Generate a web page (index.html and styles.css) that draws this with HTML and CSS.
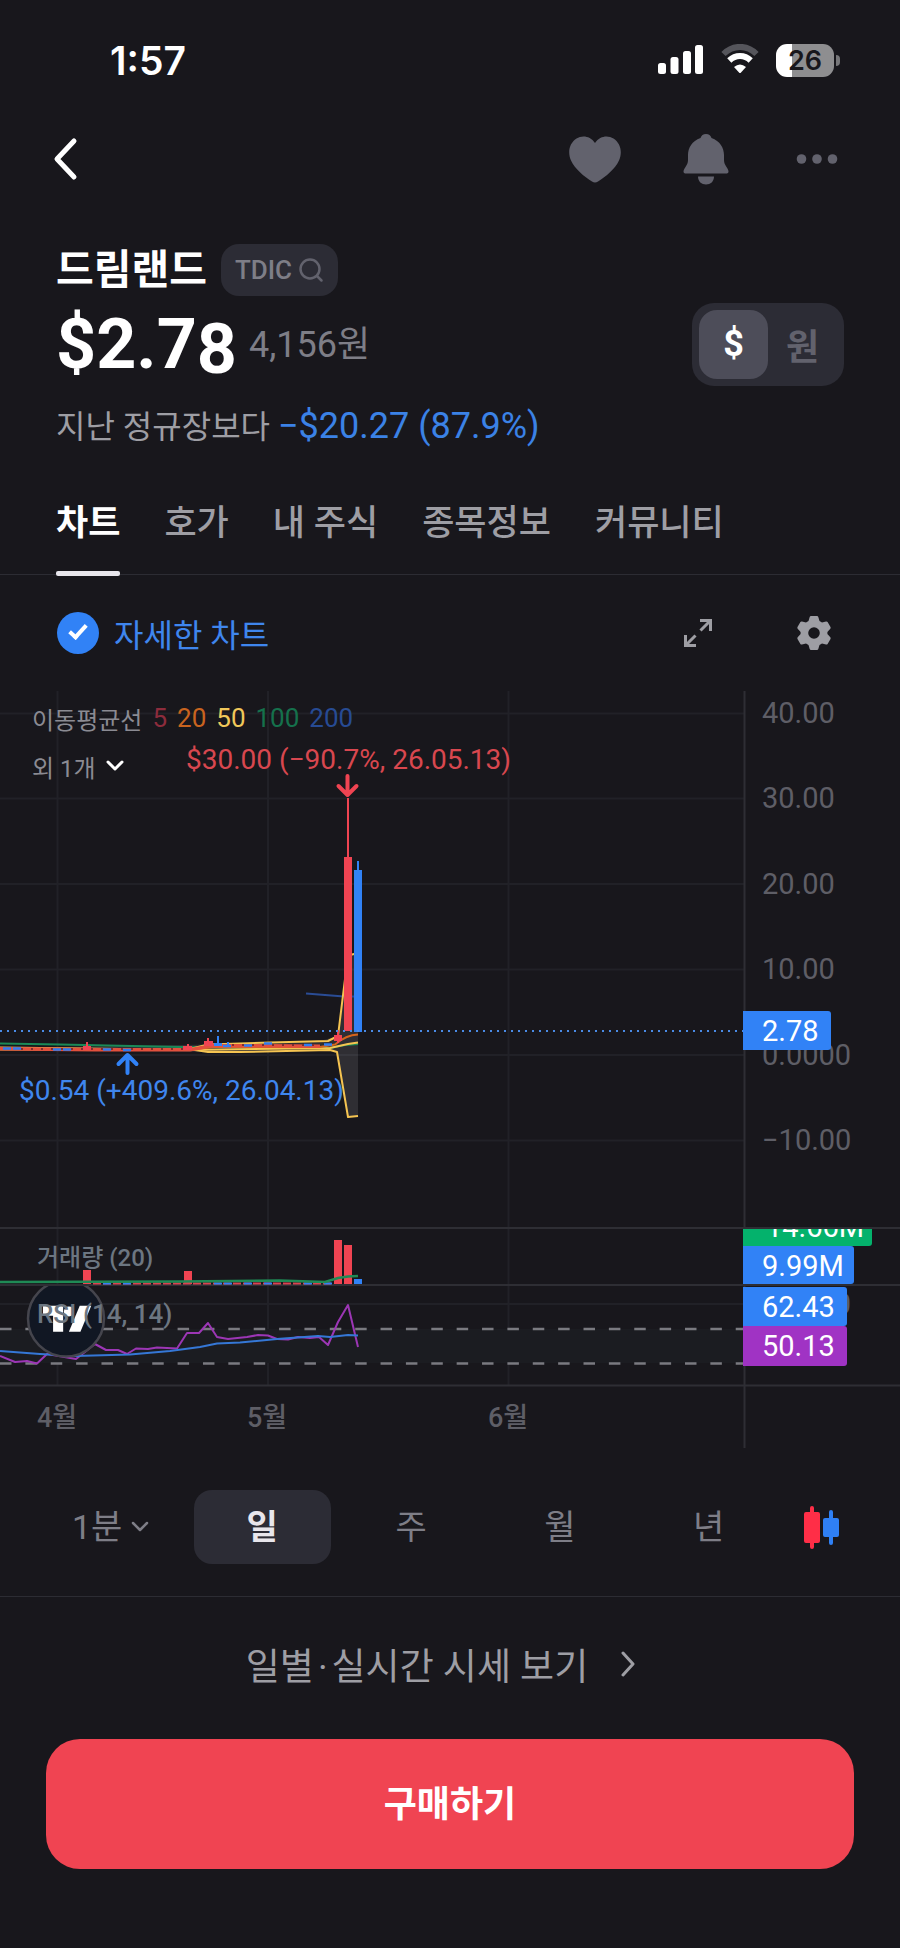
FILE: index.html
```html
<!DOCTYPE html>
<html lang="ko">
<head>
    <meta charset="UTF-8">
    <meta name="viewport" content="width=device-width, initial-scale=1.0">
    <title>드림랜드 TDIC</title>
    <link rel="stylesheet" href="styles.css">
</head>
<body>
    <div class="status-bar">
        <span class="clock">1:57</span>
        <div class="status-icons">
            <svg class="signal" width="46" height="32" viewBox="0 0 46 32" fill="#fff">
                <rect x="0" y="19" width="8" height="11" rx="2.5"/>
                <rect x="12.5" y="13" width="8" height="17" rx="2.5"/>
                <rect x="25" y="7" width="8" height="23" rx="2.5"/>
                <rect x="37" y="1" width="8" height="29" rx="2.5"/>
            </svg>
            <svg class="wifi" width="40" height="32" viewBox="0 0 40 32">
                <path d="M3.5 10C13 .5 27 .5 36.500 10" fill="none" stroke="#55555b" stroke-width="6"/>
                <path d="M9.300 16.500C15.500 10.500 24.500 10.500 30.700 16.500" fill="none" stroke="#fff" stroke-width="6"/>
                <path d="M14 23q6-5 12 0l-5 5.500q-1 1-2 0z" fill="#fff"/>
            </svg>
            <div class="battery"><span class="battery-level">26</span></div>
        </div>
    </div>

    <header class="nav">
        <a href="#" class="nav-back" aria-label="뒤로">
            <svg width="26" height="44" viewBox="0 0 26 44" fill="none" stroke="#fff" stroke-width="5" stroke-linecap="round" stroke-linejoin="round"><path d="M21 4L4 22l17 18"/></svg>
        </a>
        <div class="nav-actions">
            <button type="button" aria-label="관심">
                <svg width="54" height="50" viewBox="0 0 54 50" fill="#62626d"><path d="M27 9C22 1.500 14 1 8.500 4.500C1 9.500-.5 18.500 3 26.500C7 35 16 42.500 24 47.500q3 1.800 6 0C38 42.500 47 35 51 26.500C54.500 18.500 53 9.500 45.500 4.500C40 1 32 1.500 27 9z"/></svg>
            </button>
            <button type="button" aria-label="알림">
                <svg width="46" height="52" viewBox="0 0 46 52" fill="#62626d"><path d="M23 1c3 0 4.500 1.500 5.500 4C37 8 41 15 41 22v5c0 3 1 4.500 2.500 7c1.500 2 2 3.500 2 4.500c0 1.500-1 2-2.500 2H3c-1.500 0-2.500-.5-2.500-2c0-1 .5-2.500 2-4.500C4 31.500 5 30 5 27v-5C5 15 9 8 17.500 5C18.500 2.500 20 1 23 1z"/><path d="M15 43.500h16c0 5-3.500 8-8 8s-8-3-8-8z"/></svg>
            </button>
            <button type="button" aria-label="더보기">
                <svg width="42" height="12" viewBox="0 0 42 12" fill="#62626d"><circle cx="5.500" cy="6" r="4.800"/><circle cx="21" cy="6" r="4.800"/><circle cx="36.500" cy="6" r="4.800"/></svg>
            </button>
        </div>
    </header>

    <section class="summary">
        <div class="name-row">
            <h1>드림랜드</h1>
            <button type="button" class="ticker">TDIC
                <svg width="26" height="26" viewBox="0 0 26 26" fill="none" stroke="#62626d" stroke-width="2.500" stroke-linecap="round"><circle cx="12" cy="12" r="9.500"/><path d="M19 19l4.500 4.500"/></svg>
            </button>
        </div>
        <div class="price-row">
            <div class="price">
                <strong>$2.7<span class="rolling">8</span></strong>
                <span class="price-krw">4,156원</span>
            </div>
            <div class="currency">
                <button type="button" class="active">$</button>
                <button type="button">원</button>
            </div>
        </div>
        <p class="change">지난 정규장보다 <span>−$20.27 (87.9%)</span></p>
    </section>

    <nav class="tabs">
        <a href="#" class="active">차트</a>
        <a href="#">호가</a>
        <a href="#">내 주식</a>
        <a href="#">종목정보</a>
        <a href="#">커뮤니티</a>
    </nav>

    <div class="toolbar">
        <label for="detail" class="detail"><input type="checkbox" id="detail" checked>자세한 차트</label>
        <div class="toolbar-actions">
            <button type="button" aria-label="전체 화면">
                <svg width="30" height="30" viewBox="0 0 30 30" fill="none" stroke="#9e9ea4" stroke-width="3"><path d="M17 2.500h10.500V13M27 3L17.500 12.500M2.500 17v10.500H13M3 27l9.500-9.500"/></svg>
            </button>
            <button type="button" aria-label="설정">
                <svg width="34" height="36" viewBox="0 0 34 36"><path fill="#9e9ea4" fill-rule="evenodd" d="M14 1h6q1 0 1.300 1l1.200 4l2.500 1.500l4-1q1-.3 1.600.6l2.900 5q.5 1-.2 1.700L30.400 17v2l2.900 3.200q.7.700.2 1.700l-2.900 5q-.6.900-1.600.6l-4-1l-2.500 1.500l-1.200 4q-.3 1-1.300 1h-6q-1 0-1.300-1l-1.200-4L9 28.500l-4 1q-1 .3-1.600-.6l-2.900-5q-.5-1 .2-1.700L3.600 19v-2L.7 13.800q-.7-.7-.2-1.700l2.900-5q.6-.9 1.600-.6l4 1L11.500 6l1.200-4q.3-1 1.300-1zM17 12.200a5.800 5.800 0 1 0 0 11.600a5.800 5.800 0 1 0 0-11.600z"/></svg>
            </button>
        </div>
    </div>

    <div class="chart">
        <svg class="plot" viewBox="0 0 900 758" role="img" aria-label="일봉 차트">
            <defs>
                <clipPath id="volumePane"><rect x="0" y="538" width="900" height="56"/></clipPath>
                <clipPath id="rsiPane"><rect x="0" y="595" width="900" height="99"/></clipPath>
            </defs>

            <!-- grid -->
            <path class="grid" d="M57.500 0V694M268 0V694M508.500 0V694M0 22.500H744M0 107.500H744M0 193H744M0 278.500H744M0 364H744M0 449.500H744M0 613H744"/>
            <rect x="0" y="638" width="744" height="34" fill="#1b1c21"/>
            <path class="frame" d="M0 537H900M0 594H900M0 694.500H900M744.500 0V757"/>

            <!-- bollinger band -->
            <path d="M0 357L208 353.500L320 350L338 345L345 288L352 263L358 262V425L348 426L337 360L330 359L208 361L0 358z" fill="#fff" fill-opacity=".1"/>
            <g class="line">
                <path stroke="#2a4c94" d="M306 302.500L344 305.500H358"/>
                <path stroke="#1a8a58" d="M0 352.500L60 353.500L180 356L330 357L345 354L358 353"/>
                <path stroke="#f5c451" d="M0 356.500L120 358H190L208 353.500L270 351.500L328 350L338 345L345 288L350 264L358 262"/>
                <path stroke="#f5c451" d="M0 358.500L195 359L208 361L240 361L330 359L337 361L348 426L358 425"/>
                <path stroke="#f5c451" d="M190 359L330 357L348 353L358 351.500"/>
                <path stroke="#d5641c" d="M0 357.500L190 358.500L215 356L320 356L335 353.500Q346 344 358 343.500"/>
                <path stroke="#e2503d" d="M0 357L95 358H190L212 354H262L320 354.500"/>
                <path stroke="#e2503d" d="M0 358.500L95 359.500H190L212 355.500H262L320 356"/>
            </g>
            <path stroke="#2f7cf0" stroke-width="2.500" stroke-dasharray="8 2" d="M3 357.500H21M53 358.500H71M103 358.500H111M123 359H131M223 355H231M244 354.500H252M264 352.500H272M304 354H312M324 353.500H332"/>
            <path stroke="#7c3030" stroke-width="2" stroke-dasharray="2 8" d="M21 358H190M232 354H322"/>

            <!-- candles -->
            <g fill="#f04452">
                <path d="M83 355h8v4h-8zM86 351h2v6h-2zM183 355h9v4h-9zM187 353h2v4h-2zM204 350h9v5h-9zM207 347h2v6h-2z"/>
                <path d="M334 344h8v6h-8zM337 339h2v13h-2zM347 107h2v60h-2zM344 166h8v174h-8z"/>
            </g>
            <g fill="#3182f6">
                <path d="M217 345h2v8h-2zM214 352h8v3h-8zM227 351h2v3h-2zM357 170h2v10h-2zM354 179h8v162h-8z"/>
            </g>
            <path d="M0 340H743" stroke="#4a8be6" stroke-width="2" stroke-dasharray="2 5"/>

            <!-- high and low -->
            <path class="arrow" d="M347.500 85V102M338.500 95L347.500 104L356.500 95" stroke="#f04452"/>
            <path class="arrow" d="M127.500 382V366M118.500 373L127.500 364L136.500 373" stroke="#3182f6"/>
            <text class="mark" x="186" y="78" fill="#d8474f">$30.00 (−90.7%, 26.05.13)</text>
            <text class="mark" x="19" y="409" fill="#3f86ee">$0.54 (+409.6%, 26.04.13)</text>

            <!-- volume -->
            <g clip-path="url(#volumePane)">
                <path fill="#f04452" d="M83 579h8v14h-8zM184 580h8v13h-8zM334 549h8v44h-8zM344 554h8v39h-8z"/>
                <path fill="#3182f6" d="M354 588h8v5h-8z"/>
                <path stroke="#d94350" stroke-width="2" stroke-dasharray="8 2" d="M93 592.500H332"/>
                <path stroke="#3182f6" stroke-width="2" stroke-dasharray="8 2" d="M103 592.500H111M123 592.500H131M214 592.500H232M244 592.500H252M264 592.500H272M304 592.500H312M324 592.500H332"/>
                <path stroke="#1f8a55" stroke-width="2.500" fill="none" d="M0 591L180 590.500L280 589.500L325 591L338 587L348 585.500L358 585"/>
                <text class="study volume" x="37" y="575">거래량 (20)</text>
            </g>

            <!-- rsi -->
            <g clip-path="url(#rsiPane)">
                <path stroke="#7a7a80" stroke-width="2.500" stroke-dasharray="11.500 13.870" d="M0 638H744M0 672.500H744"/>
                <path class="line" stroke="#9c36b5" d="M0 665L15 671L27 670L37 672.500L47 663L76 668L95 653L106 659H118L127 663L136 657.500L148 658L157 656.500L177 657.500L187 642H199L208 632L217 646L228 648L247 646L258 644L268 644.500L277 648L288 648.500L298 646L310 647L319 646L328 654L338 631L348 614L358 656"/>
                <path class="line" stroke="#3577d6" d="M0 660L40 663L75 665L130 663.500L170 660L200 656L217 652.500L240 651.500L277 648L318 645L330 646L348 644L358 644.500"/>
                <circle cx="66" cy="627.500" r="38" fill="#111723" stroke="#45454d" stroke-width="2.500"/>
                <g transform="translate(43 609) scale(1.440)" fill="#fff">
                    <path d="M14 22H7V11H0V4h14z"/><circle cx="18" cy="8" r="3.500"/><path d="M26 22h-8l7.500-18h8z"/>
                </g>
                <text class="study" x="37" y="632">RSI (14, 14)</text>
            </g>

            <!-- price axis -->
            <g class="axis">
                <text x="762" y="32">40.00</text>
                <text x="762" y="117">30.00</text>
                <text x="762" y="203">20.00</text>
                <text x="762" y="288">10.00</text>
                <text x="762" y="374">0.0000</text>
                <text x="762" y="459">−10.00</text>
                <text x="762" y="623">100.00</text>
            </g>
            <path fill="#3182f6" d="M743 320h85q3 0 3 3v33q0 3-3 3h-85z"/>
            <g clip-path="url(#volumePane)">
                <path fill="#04b26c" d="M743 520h129v32q0 3-3 3H743z"/>
                <path fill="#3182f6" d="M743 555h108q3 0 3 3v32q0 3-3 3H743z"/>
                <text class="tag" x="766" y="546">14.66M</text>
            </g>
            <path fill="#3182f6" d="M743 596h101q3 0 3 3v33q0 3-3 3H743z"/>
            <path fill="#a033c4" d="M743 635h101q3 0 3 3v34q0 3-3 3H743z"/>
            <text class="tag" x="762" y="350">2.78</text>
            <text class="tag" x="762" y="585">9.99M</text>
            <text class="tag" x="762" y="626">62.43</text>
            <text class="tag" x="762" y="665">50.13</text>

            <!-- months -->
            <g class="month">
                <text x="57" y="736">4월</text>
                <text x="267" y="736">5월</text>
                <text x="508" y="736">6월</text>
            </g>
        </svg>
        <div class="legend">
            <div class="legend-row">이동평균선 <span class="ma5">5</span><span class="ma20">20</span><span class="ma50">50</span><span class="ma100">100</span><span class="ma200">200</span></div>
            <button type="button" class="legend-row">외 1개
                <svg width="18" height="12" viewBox="0 0 18 12" fill="none" stroke="#fff" stroke-width="3" stroke-linecap="round" stroke-linejoin="round"><path d="M2 2l7 7l7-7"/></svg>
            </button>
        </div>
    </div>

    <div class="periods">
        <div class="period minute">
            <select aria-label="분봉"><option>1분</option></select>
            <svg width="18" height="12" viewBox="0 0 18 12" fill="none" stroke="#7e7e87" stroke-width="2.500" stroke-linecap="round" stroke-linejoin="round"><path d="M2 2l7 7l7-7"/></svg>
        </div>
        <button type="button" class="period active">일</button>
        <button type="button" class="period">주</button>
        <button type="button" class="period">월</button>
        <button type="button" class="period">년</button>
        <button type="button" class="period chart-type" aria-label="차트 종류">
            <svg width="36" height="44" viewBox="0 0 36 44"><path fill="#ff2e47" d="M6 3q0-2 2-2t2 2v4h4q2 0 2 2v27q0 2-2 2h-4v4q0 2-2 2t-2-2v-4H2q-2 0-2-2V9q0-2 2-2h4z"/><path fill="#2f80f5" d="M25 7q0-2 2-2t2 2v6h4q2 0 2 2v15q0 2-2 2h-4v6q0 2-2 2t-2-2v-6h-4q-2 0-2-2V15q0-2 2-2h4z"/></svg>
        </button>
    </div>

    <a href="#" class="quotes">
        <span>일별<span class="dot">·</span>실시간 시세 보기</span>
        <svg width="16" height="26" viewBox="0 0 16 26" fill="none" stroke="#9e9ea4" stroke-width="3" stroke-linecap="round" stroke-linejoin="round"><path d="M3 2l10 11L3 24"/></svg>
    </a>

    <div class="buy-bar">
        <button type="button" class="buy-btn">구매하기</button>
    </div>
</body>
</html>
```

FILE: styles.css
```css
*, *::before, *::after {
    box-sizing: border-box;
}

body {
    margin: 0;
    background-color: #18171c;
    color: #fff;
    font-family: Roboto, "Noto Sans CJK KR", sans-serif;
    font-size: 32px;
}

a {
    color: inherit;
    text-decoration: none;
}

button, select {
    padding: 0;
    border: none;
    background: none;
    color: inherit;
    font: inherit;
    cursor: pointer;
}

svg {
    display: block;
}

/* Status bar */
.status-bar {
    display: flex;
    justify-content: space-between;
    align-items: center;
    height: 120px;
    padding: 0 60px 0 110px;
}

.clock {
    font-family: Inter, sans-serif;
    font-size: 39px;
    font-weight: 600;
}

.status-icons {
    display: flex;
    align-items: center;
    gap: 16px;
}

.battery {
    position: relative;
    width: 58px;
    height: 33px;
    margin-right: 6px;
    border-radius: 11px;
    background: linear-gradient(to right, #fff 16px, #8e8e90 16px);
    text-align: center;
}

.battery::after {
    content: "";
    position: absolute;
    top: 11px;
    right: -6px;
    width: 4px;
    height: 11px;
    border-radius: 0 4px 4px 0;
    background-color: #77777a;
}

.battery-level {
    display: block;
    color: #18171c;
    font-family: Inter, sans-serif;
    font-size: 27px;
    font-weight: 600;
    line-height: 33px;
}

/* Navigation */
.nav {
    display: flex;
    justify-content: space-between;
    align-items: center;
    height: 78px;
    padding: 0 62px 0 53px;
}

.nav-actions {
    display: flex;
    align-items: center;
}

.nav-actions button {
    margin-left: 61px;
}

.nav-actions button:last-child {
    margin-left: 67px;
}

/* Summary */
.summary {
    padding: 46px 56px 0;
}

.name-row {
    display: flex;
    align-items: center;
    gap: 14px;
    height: 52px;
}

h1 {
    margin: 0;
    font-size: 41px;
    font-weight: 700;
    line-height: 52px;
}

.ticker {
    display: flex;
    align-items: center;
    gap: 6px;
    height: 52px;
    padding: 0 14px;
    border-radius: 18px;
    background-color: #2c2c35;
    color: #7e7e87;
    font-size: 26px;
    font-weight: 500;
}

.price-row {
    display: flex;
    justify-content: space-between;
    align-items: center;
    height: 96px;
}

.price {
    display: flex;
    align-items: center;
    gap: 12px;
}

.price strong {
    font-size: 70px;
    font-weight: 700;
    line-height: 80px;
}

/* last digit is still rolling into place */
.rolling {
    line-height: 1;
    vertical-align: -5px;
}

.price-krw {
    padding-bottom: 6px;
    color: #7e7e87;
    font-size: 36px;
}

.currency {
    display: flex;
    padding: 7px;
    border-radius: 22px;
    background-color: #2c2c35;
}

.currency button {
    width: 69px;
    height: 69px;
    border-radius: 18px;
    color: #62626d;
    font-size: 36px;
    font-weight: 700;
}

.currency .active {
    background-color: #4d4d59;
    color: #fff;
}

.change {
    height: 68px;
    margin: 0;
    color: #9e9ea4;
    line-height: 68px;
}

.change span {
    color: #3b82e6;
    font-size: 36px;
}

/* Tabs */
.tabs {
    display: flex;
    gap: 44px;
    padding: 0 56px;
    border-bottom: 1px solid #2c2c33;
    color: #9e9ea4;
    font-size: 35px;
    font-weight: 500;
    line-height: 48px;
}

.tabs a {
    position: relative;
    padding: 40px 0 26px;
}

.tabs .active {
    color: #fff;
    font-weight: 700;
}

.tabs .active::after {
    content: "";
    position: absolute;
    right: 0;
    bottom: -2px;
    left: 0;
    height: 5px;
    border-radius: 2px;
    background-color: #e8e6ec;
}

/* Chart toolbar */
.toolbar {
    display: flex;
    justify-content: space-between;
    align-items: center;
    height: 116px;
    padding: 0 69px 0 57px;
}

.detail {
    display: flex;
    align-items: center;
    gap: 15px;
    color: #3f86ee;
}

.detail input {
    display: grid;
    place-items: center;
    width: 42px;
    height: 42px;
    margin: 0;
    border-radius: 50%;
    background-color: #3182f6;
    appearance: none;
}

.detail input::after {
    content: "";
    width: 10px;
    height: 18px;
    margin-bottom: 6px;
    border: solid #fff;
    border-width: 0 4px 4px 0;
    transform: rotate(42deg);
}

.toolbar-actions {
    display: flex;
    align-items: center;
    gap: 84px;
}

/* Chart */
.chart {
    position: relative;
}

.plot {
    width: 100%;
    height: auto;
}

.grid {
    stroke: #212127;
    stroke-width: 2;
}

.frame {
    stroke: #2e2e34;
    stroke-width: 2;
}

.line, .line path {
    fill: none;
    stroke-width: 2;
    stroke-linejoin: round;
}

.arrow {
    fill: none;
    stroke-width: 4;
    stroke-linecap: round;
    stroke-linejoin: round;
}

.mark {
    font-size: 28px;
}

.study {
    fill: #6c7681;
    font-size: 26px;
    font-weight: 500;
}

.volume {
    font-size: 24px;
}

.axis {
    fill: #5e5e66;
    font-size: 29px;
}

.tag {
    fill: #fff;
    font-size: 29px;
}

.month {
    fill: #5e5e66;
    font-size: 27px;
    font-weight: 500;
    text-anchor: middle;
}

.legend {
    position: absolute;
    top: 3px;
    left: 32px;
    color: #8b8b93;
    font-size: 24px;
}

.legend-row {
    display: flex;
    align-items: center;
    gap: 10px;
    height: 48px;
}

.legend-row span {
    font-size: 26px;
}

.ma5 {
    color: #8d2c3c;
}

.ma20 {
    color: #c9641f;
}

.ma50 {
    color: #f0c85a;
}

.ma100 {
    color: #15714c;
}

.ma200 {
    color: #274b93;
}

/* Periods */
.periods {
    display: grid;
    grid-template-columns: repeat(5, 149fr) 78fr;
    padding: 41px 39px 32px;
    border-bottom: 1px solid #2c2c33;
    color: #7e7e87;
}

.period {
    display: flex;
    justify-content: center;
    align-items: center;
    height: 74px;
    margin: 0 6px;
    padding-bottom: 6px;
    border-radius: 18px;
    font-size: 34px;
}

.period.active {
    background-color: #2c2c35;
    color: #e8e6ec;
    font-weight: 700;
}

.period.minute {
    gap: 8px;
    padding: 0 6px 0 0;
}

.period.chart-type {
    padding: 0;
}

.minute select {
    appearance: none;
}

/* Quotes link */
.quotes {
    display: flex;
    justify-content: center;
    align-items: center;
    gap: 32px;
    height: 142px;
    padding: 0 18px 8px 0;
    color: #9e9ea4;
    font-size: 37px;
}

.dot {
    margin: 0 4px;
}

.buy-bar {
    padding: 0 46px 78px;
}

.buy-btn {
    width: 100%;
    height: 130px;
    padding-bottom: 6px;
    border-radius: 34px;
    background-color: #f04452;
    color: #fff;
    font-size: 36px;
    font-weight: 700;
}
```
